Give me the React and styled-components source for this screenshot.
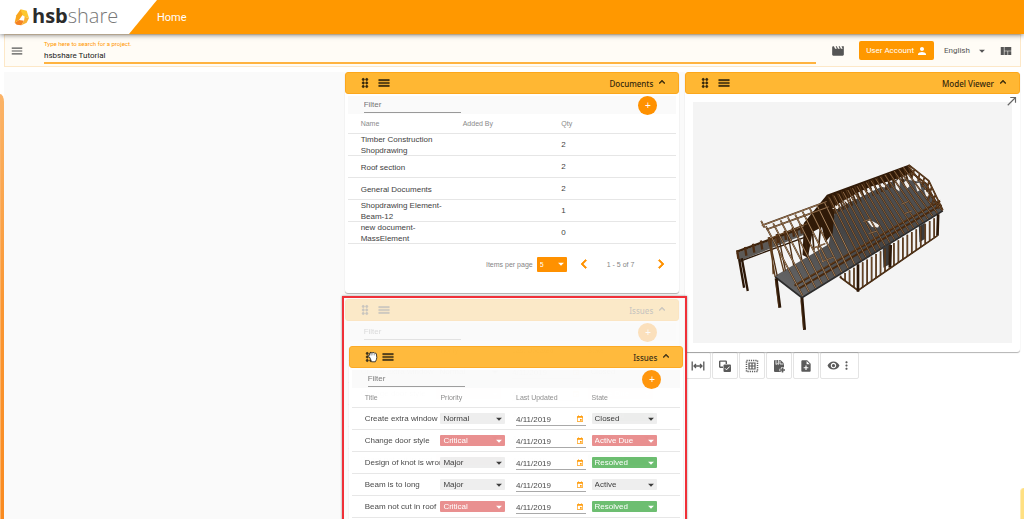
import React from 'react'
import styled, { createGlobalStyle } from "styled-components";
import { MdMenu, MdMovie, MdPerson, MdViewQuilt, MdArrowDropDown, MdDragIndicator, MdExpandLess, MdChevronLeft, MdChevronRight, MdCallMade, MdEvent, MdVisibility, MdMoreVert, MdNoteAdd } from "react-icons/md";

const documents = [
    { name: 'Timber Construction Shopdrawing', qty: 2 },
    { name: 'Roof section', qty: 2 },
    { name: 'General Documents', qty: 2 },
    { name: 'Shopdrawing Element-Beam-12', qty: 1 },
    { name: 'new document-MassElement', qty: 0 },
]

const issues = [
    { title: 'Create extra window', priority: 'Normal', state: 'Closed' },
    { title: 'Change door style', priority: 'Critical', state: 'Active Due' },
    { title: 'Design of knot is wrong', priority: 'Major', state: 'Resolved' },
    { title: 'Beam is to long', priority: 'Major', state: 'Active' },
    { title: 'Beam not cut in roof', priority: 'Critical', state: 'Resolved' },
]

const tones = {
    Critical: 'red',
    'Active Due': 'red',
    Resolved: 'green',
}

const toneColors = {
    red: '#e88b8b',
    green: '#66bb6a',
    grey: '#eeeeee',
    orange: '#ff9100',
}

function Panel({ title, children, minHeight }) {
    return (
        <PanelWrap>
            <PanelHeader>
                <IconButton aria-label={`Move ${title}`}><MdDragIndicator size={14} /></IconButton>
                <IconButton aria-label={`${title} menu`}><MdMenu size={14} /></IconButton>
                <h2>{title}</h2>
                <IconButton aria-label={`Collapse ${title}`}><MdExpandLess size={12} /></IconButton>
            </PanelHeader>
            <PanelBody $minHeight={minHeight}>{children}</PanelBody>
        </PanelWrap>
    )
}

function FilterRow({ label }) {
    return (
        <FilterBar>
            <FilterInput placeholder="Filter" aria-label={label} />
            <AddButton aria-label="Add">+</AddButton>
        </FilterBar>
    )
}

function Dropdown({ value, tone = 'grey', width, height, label }) {
    return (
        <SelectWrap $tone={tone} $width={width} $height={height}>
            <select defaultValue={value} aria-label={label}>
                <option>{value}</option>
            </select>
            <MdArrowDropDown size={14} />
        </SelectWrap>
    )
}

function DocumentsPanel() {
    return (
        <Panel title="Documents" minHeight="199px">
            <FilterRow label="Filter documents" />
            <Table>
                <colgroup>
                    <col width="35%" />
                    <col width="30%" />
                    <col width="35%" />
                </colgroup>
                <thead>
                    <tr><th>Name</th><th>Added By</th><th>Qty</th></tr>
                </thead>
                <tbody>
                    {documents.map(doc => (
                        <tr key={doc.name}>
                            <DocName>{doc.name}</DocName>
                            <td></td>
                            <td>{doc.qty}</td>
                        </tr>
                    ))}
                </tbody>
            </Table>
            <Pagination>
                <span>Items per page</span>
                <Dropdown value="5" tone="orange" width="30px" height="15px" label="Items per page" />
                <PageButton aria-label="Previous page"><MdChevronLeft size={18} /></PageButton>
                <span>1 - 5 of 7</span>
                <PageButton aria-label="Next page"><MdChevronRight size={18} /></PageButton>
            </Pagination>
        </Panel>
    )
}

function IssuesPanel() {
    return (
        <Panel title="Issues" minHeight="240px">
            <FilterRow label="Filter issues" />
            <Table>
                <colgroup>
                    <col width="27%" />
                    <col width="23%" />
                    <col width="23%" />
                    <col width="27%" />
                </colgroup>
                <thead>
                    <tr><th>Title</th><th>Priority</th><th>Last Updated</th><th>State</th></tr>
                </thead>
                <tbody>
                    {issues.map(issue => (
                        <tr key={issue.title}>
                            <IssueTitle>{issue.title}</IssueTitle>
                            <td><Dropdown value={issue.priority} tone={tones[issue.priority]} width="65px" height="11px" label="Priority" /></td>
                            <td>
                                <DateField>
                                    <input defaultValue="4/11/2019" aria-label="Last updated" />
                                    <MdEvent size={8} />
                                </DateField>
                            </td>
                            <td><Dropdown value={issue.state} tone={tones[issue.state]} width="65px" height="11px" label="State" /></td>
                        </tr>
                    ))}
                </tbody>
            </Table>
        </Panel>
    )
}

// point on the segment a-b
const at = (a, b, t) => [a[0] + (b[0] - a[0]) * t, a[1] + (b[1] - a[1]) * t]

// n members running from segment a-b to segment c-d
function members(a, b, c, d, n) {
    let path = ''
    for (let i = 0; i < n; i++) {
        const t = i / (n - 1)
        const p = at(a, b, t)
        const q = at(c, d, t)
        path += `M${p[0].toFixed(1)} ${p[1].toFixed(1)}L${q[0].toFixed(1)} ${q[1].toFixed(1)}`
    }
    return path
}

function Timber({ d, light = '#a07a58', dark = '#3b220c', width = 5 }) {
    return (
        <>
            <path d={d} stroke={dark} strokeWidth={width} />
            <path d={d} stroke={light} strokeWidth={width * 0.45} />
        </>
    )
}

function House() {
    return (
        <svg viewBox="0 0 318 241" role="img" aria-label="Timber frame model">
            <defs>
                <linearGradient id="deck" x1="0" y1="1" x2="1" y2="0">
                    <stop offset="0" stopColor="#6a6a6b" />
                    <stop offset=".5" stopColor="#444445" />
                    <stop offset="1" stopColor="#565657" />
                </linearGradient>
            </defs>
            <g transform="translate(32 48) scale(.3333)" fill="none">
                {/* rear beam and its post */}
                <path d="M34 308L240 232L246 250L44 332Z" fill="#5c5956" />
                <path d="M36 304L240 230" stroke="#3b220c" strokeWidth="7" />
                <path d="M44 333L236 262" stroke="#2b1707" strokeWidth="4" />
                <path d={members([40, 326], [230, 250], [36, 300], [226, 222], 9)} stroke="#4d2c12" strokeWidth="7" />
                <path d="M42 326L57 412M50 324L68 422" stroke="#2b1707" strokeWidth="7" />
                {/* deck */}
                <path d="M148 378L310 282L330 178L520 84L600 98L652 182L230 442Z" fill="url(#deck)" />
                <path d="M150 380L230 442L652 182" stroke="#2c2c2c" strokeWidth="5" />
                {/* far side of the roof */}
                <path d="M236 218L305 134L550 44L562 66L520 84L440 108L400 126L330 166L322 250L300 276L290 230L262 245L248 322L232 314Z" fill="#301a08" />
                <Timber d={members([308, 138], [548, 48], [330, 190], [560, 84], 19)} light="#54351a" />
                <path d="M320 176L344 160L338 176ZM356 150L374 144L366 160ZM420 126L444 116L440 124ZM462 108L486 98L478 112ZM508 98L524 82L522 124L512 116ZM536 96L546 88L552 108L542 118ZM568 100L582 98L588 118L576 124ZM596 120L606 116L612 140L602 138Z" fill="#f2eee9" />
                <path d="M426 212L436 210L462 224L458 232L440 230Z" fill="#f2eee9" />
                {/* left end trusses */}
                <path d={members([132, 262], [214, 234], [156, 376], [230, 330], 4)} stroke="#4b2d13" strokeWidth="4" />
                <path d="M130 262L150 380M138 262L144 372M150 262L176 364M132 266L246 220" stroke="#5e3c1c" strokeWidth="4" />
                <path d="M240 262L248 322M262 250L266 300M286 230L280 292" stroke="#3b220c" strokeWidth="5" />
                {/* near side of the roof */}
                <path d="M208 406L644 152M218 416L648 164" stroke="#49290e" strokeWidth="6" />
                <path d="M208 404L644 150" stroke="#6d4a29" strokeWidth="2" />
                <Timber d={members([122, 228], [298, 158], [232, 436], [388, 342], 9)} light="#c7a17b" />
                <Timber d={members([312, 142], [548, 46], [408, 330], [650, 180], 18)} light="#a07a55" />
                <Timber d="M108 212L118 232M110 226L304 154M124 238L310 170" light="#b38b66" />
                <Timber d="M262 294L300 280M290 334L326 320M276 288L294 336M414 214L438 206M430 250L456 242M528 162L548 154M538 190L560 182" light="#c7a17b" width={4} />
                {/* gable */}
                <Timber d="M550 44L610 92L652 180M556 66L602 100L640 176M566 60L560 80M582 72L578 94M596 84L590 110M610 94L604 124M618 112L608 150M630 134L618 164M642 158L630 174" light="#744b27" />
                {/* walls under the eave */}
                <path d="M472 292L496 278L496 340L474 352ZM580 228L598 218L598 266L582 276Z" fill="#3c3c3d" />
                <Timber d={members([346, 376], [386, 352], [346, 382], [386, 412], 4)} light="#7d5836" />
                <Timber d={members([412, 336], [626, 204], [412, 411], [626, 262], 17)} light="#7d5836" />
                <Timber d="M344 380L398 420L636 256" light="#5e3c1c" />
                <path d="M398 342L398 424M496 284L494 350M638 192L636 256" stroke="#2b1707" strokeWidth="8" />
                {/* posts */}
                <path d="M153 384L164 472M230 442L238 538" stroke="#2b1707" strokeWidth="9" />
                <path d="M151 390L161 470M227 450L235 536" stroke="#5e3c1c" strokeWidth="2" />
            </g>
        </svg>
    )
}

function ViewerTools() {
    return (
        <Tools>
            <ToolButton aria-label="Measure">
                <svg width="14" height="14" viewBox="0 0 14 14" fill="none" stroke="currentColor" strokeWidth="1.3">
                    <path d="M1.2 2.5v9M12.8 2.5v9M3 7h8M5 5L3 7l2 2M9 5l2 2-2 2" />
                </svg>
            </ToolButton>
            <ToolButton aria-label="Select objects">
                <svg width="14" height="14" viewBox="0 0 14 14" fill="none" stroke="currentColor" strokeWidth="1.4">
                    <path d="M5 8.3H2.3a.6.6 0 0 1-.6-.6v-5a.6.6 0 0 1 .6-.6h5.4a.6.6 0 0 1 .6.6V5" />
                    <rect x="5.5" y="5.5" width="7.5" height="7.5" rx="1" fill="currentColor" stroke="none" />
                    <path d="M7 9.3l1.5 1.5L11.6 7.6" stroke="#fff" strokeWidth="1" />
                </svg>
            </ToolButton>
            <ToolButton aria-label="Select all">
                <svg width="14" height="14" viewBox="0 0 14 14" fill="none" stroke="currentColor">
                    <rect x="1.5" y="1.5" width="11" height="11" strokeWidth="1.5" strokeDasharray="1.2 1" />
                    <path d="M4 4h6v6H4zM7 4v6M4 7h6" strokeWidth="1.2" />
                </svg>
            </ToolButton>
            <ToolButton aria-label="Save view">
                <svg width="14" height="14" viewBox="0 0 14 14" fill="currentColor">
                    <path d="M3 1h5.5L12 4.5V12a1 1 0 0 1-1 1H3a1 1 0 0 1-1-1V2a1 1 0 0 1 1-1z" />
                    <path d="M8 1.5V5h3.5M4 1v4.500l1.200-1 1.200 1V1" fill="none" stroke="#fff" strokeWidth=".8" />
                    <path d="M10.500 8v6M7.500 11h6" stroke="#fff" strokeWidth="2.400" />
                    <path d="M10.500 8.500v5M8 11h5" stroke="currentColor" strokeWidth="1.500" />
                </svg>
            </ToolButton>
            <ToolButton aria-label="New file"><MdNoteAdd size={14} /></ToolButton>
            <ToolButton aria-label="Visibility" $wide>
                <MdVisibility size={13} />
                <MdMoreVert size={13} />
            </ToolButton>
        </Tools>
    )
}

function App() {
    return (
        <Page>
            <GlobalStyle />
            <LeftEdge />
            <RightEdge />
            <Header>
                <Brand>
                    <svg width="16" height="18" viewBox="0 0 48 54">
                        <path d="M20 4L38 8L45 30L32 26L24 20Z" fill="#fdc82f" />
                        <path d="M20 4L26 20L15 36L2 44L7 22Z" fill="#f9a51b" />
                        <path d="M2 44L15 36L30 38L22 52L8 50Z" fill="#f58220" />
                        <path d="M45 30L32 26L30 38L22 52L38 44Z" fill="#f9b233" />
                    </svg>
                    <b>hsb</b><span>share</span>
                </Brand>
                <a href="#home">Home</a>
            </Header>
            <Toolbar>
                <IconButton aria-label="Menu"><MdMenu size={14} /></IconButton>
                <Search>
                    <label htmlFor="project">Type here to search for a project.</label>
                    <input id="project" defaultValue="hsbshare Tutorial" />
                </Search>
                <IconButton aria-label="Videos"><MdMovie size={14} /></IconButton>
                <AccountButton>User Account <MdPerson size={12} /></AccountButton>
                <Language>
                    <select defaultValue="English" aria-label="Language">
                        <option>English</option>
                    </select>
                    <MdArrowDropDown size={14} />
                </Language>
                <IconButton aria-label="Layout"><MdViewQuilt size={14} /></IconButton>
            </Toolbar>
            <Board>
                <Column $grey />
                <Column $grey>
                    <DocumentsPanel />
                    <DropSlot>
                        <Ghost inert><IssuesPanel /></Ghost>
                        <Dragged>
                            <IssuesPanel />
                            <GrabCursor viewBox="0 0 12 12" width="12" height="12">
                                <path d="M2.500 6L1.200 4.800Q1.500 3.600 2.800 4.200L2.600 2.500Q3.300 1.400 4.200 2.300Q4.800.8 5.800 1.800Q7 .8 7.600 2.200Q9 1.600 9.400 3L9.800 6.500Q9.600 9 8.300 10.800H4.500Q3.800 8.500 2.500 6Z" fill="#fff" stroke="#222" strokeWidth=".9" />
                                <path d="M4.300 2.500v2M5.900 2v2.300M7.600 2.400v2" stroke="#555" strokeWidth=".5" />
                            </GrabCursor>
                        </Dragged>
                        <Outline />
                    </DropSlot>
                </Column>
                <Column>
                    <Panel title="Model Viewer">
                        <Canvas><House /></Canvas>
                        <Expand aria-label="Open full view"><MdCallMade size={14} /></Expand>
                    </Panel>
                    <ViewerTools />
                </Column>
            </Board>
        </Page>
    )
}

export default App

const GlobalStyle = createGlobalStyle`
    * {
        box-sizing: border-box;
    }
    body {
        margin: 0;
        background: #fff;
        font-family: "Liberation Sans", Arial, sans-serif;
        font-size: 8px;
        color: #424242;
    }
    button, input, select {
        font: inherit;
        color: inherit;
        margin: 0;
        padding: 0;
        border: none;
        border-radius: 0;
        background: none;
        outline: none;
        appearance: none;
    }
    svg {
        display: block;
        flex-shrink: 0;
    }
`

const Page = styled.div`
    position: relative;
    height: 100vh;
    overflow: hidden;
    display: flex;
    flex-direction: column;
`

const LeftEdge = styled.div`
    position: absolute;
    left: 0;
    top: 94px;
    bottom: 0;
    width: 4px;
    background: linear-gradient(#fbb468, #fa9632 50%, #f98a20);
    border-left: 1px solid #fbb268;
    border-top-right-radius: 4px 8px;
`

const RightEdge = styled(LeftEdge)`
    left: auto;
    right: 0;
    top: auto;
    height: 31px;
    background: #ffe082;
    border-left: 1px solid #ffecb3;
    border-radius: 4px 0 0 0;
`

const Header = styled.header`
    position: relative;
    z-index: 1;
    flex-shrink: 0;
    height: 34px;
    display: flex;
    align-items: center;
    background: #ff9800;
    box-shadow: 0 1px 5px rgba(0, 0, 0, 0.5);
    a {
        font-family: Roboto, sans-serif;
        font-size: 11px;
        color: white;
        text-decoration: none;
    }
`

const Brand = styled.div`
    width: 157px;
    height: 100%;
    padding-left: 14px;
    display: flex;
    align-items: center;
    background: white;
    clip-path: polygon(0 0, 100% 0, 129px 100%, 0 100%);
    font-family: "Open Sans", sans-serif;
    font-size: 20px;
    line-height: 32px;
    color: #2b2b2b;
    svg {
        margin-right: 2px;
    }
    b {
        margin-bottom: 2px;
    }
    span {
        margin-bottom: 2px;
        font-weight: 300;
        color: #777;
    }
`

const Toolbar = styled.div`
    flex-shrink: 0;
    height: 33px;
    margin: 0 3px 5px 4px;
    padding: 0 7px 0 5px;
    display: flex;
    align-items: center;
    border: 1px solid #fde8c8;
    background: #fffcf6;
    font-family: Roboto, sans-serif;
    color: #555;
`

const IconButton = styled.button`
    display: flex;
    color: inherit;
    cursor: pointer;
`

const Search = styled.div`
    flex: 1;
    margin: 3px 15px 0 20px;
    display: flex;
    flex-direction: column;
    border-bottom: 2px solid #ffb340;
    label {
        font-size: 6px;
        line-height: 8px;
        color: #ff9800;
    }
    input {
        height: 14px;
        color: #212121;
    }
`

const AccountButton = styled.button`
    height: 19px;
    margin: 0 10px 0 14px;
    padding: 0 6px 0 7px;
    display: flex;
    align-items: center;
    gap: 2px;
    border-radius: 2px;
    background: #ff9800;
    color: white;
    cursor: pointer;
`

const Language = styled.div`
    position: relative;
    margin-right: 10px;
    select {
        width: 45px;
        height: 14px;
    }
    svg {
        position: absolute;
        right: 0;
        top: 0;
        pointer-events: none;
    }
`

const Board = styled.main`
    flex: 1;
    min-height: 0;
    position: relative;
    margin: 0 4px;
    display: grid;
    grid-template-columns: repeat(3, 1fr);
    gap: 6px;
`

const Column = styled.div`
    min-width: 0;
    display: flex;
    flex-direction: column;
    gap: ${props => props.$grey ? '6px' : '0'};
    background: ${props => props.$grey ? '#fafafa' : 'transparent'};
    box-shadow: ${props => props.$grey ? '6px 0 #fafafa' : 'none'};
`

const PanelWrap = styled.section`
    position: relative;
    flex-shrink: 0;
    background: white;
    border-radius: 3px;
    box-shadow: 0 1px 1px rgba(0, 0, 0, 0.3);
`

const PanelHeader = styled.header`
    height: 22px;
    padding: 0 10px 0 12px;
    display: flex;
    align-items: center;
    gap: 5px;
    border: 1px solid #fca71c;
    border-radius: 3px;
    background: #ffb733;
    color: #33260c;
    h2 {
        flex: 1;
        margin: 0;
        text-align: right;
        font-family: "Noto Sans", sans-serif;
        font-size: 8px;
        font-weight: 500;
    }
    svg path:last-child {
        stroke-width: 1;
    }
    button:last-child {
        margin: 0 0 3px -2px;
    }
`

const PanelBody = styled.div`
    min-height: ${props => props.$minHeight || 'auto'};
    padding: 2px 3px 0;
`

const FilterBar = styled.div`
    height: 18px;
    padding: 0 19px 0 16px;
    display: flex;
    align-items: center;
    justify-content: space-between;
    background: #fafafa;
`

const FilterInput = styled.input`
    width: 97px;
    height: 15px;
    border-bottom: 1px solid #999;
    &::placeholder {
        color: #757575;
        opacity: 1;
    }
`

const AddButton = styled.button`
    width: 19px;
    height: 19px;
    flex-shrink: 0;
    border-radius: 50%;
    background: #ff9100;
    color: white;
    font-size: 10px;
    line-height: 19px;
    cursor: pointer;
`

const Table = styled.table`
    width: 100%;
    table-layout: fixed;
    border-spacing: 0;
    line-height: 11px;
    th, td {
        height: 22px;
        padding: 0;
        text-align: left;
        vertical-align: top;
        box-shadow: inset 0 -1px #e6e6e6;
    }
    th {
        height: 20px;
        padding-top: 4px;
        font-size: 7px;
        font-weight: normal;
        color: #8a8a8a;
    }
    th:first-child, td:first-child {
        padding-left: 13px;
    }
    tbody td {
        padding-top: 5px;
    }
`

const DocName = styled.td`
    &&& {
        height: 22px;
        padding-top: 0;
        padding-right: 16px;
        vertical-align: middle;
    }
`

const IssueTitle = styled.td`
    overflow: hidden;
    white-space: nowrap;
`

const SelectWrap = styled.div`
    position: relative;
    width: ${props => props.$width};
    height: ${props => props.$height};
    border-radius: 1px;
    background: ${props => toneColors[props.$tone]};
    color: ${props => props.$tone === 'grey' ? '#333' : 'white'};
    select {
        display: block;
        width: 100%;
        height: 100%;
        padding-left: 3px;
    }
    svg {
        position: absolute;
        right: -1px;
        top: calc(50% - 7px);
        pointer-events: none;
    }
`

const DateField = styled.div`
    width: 70px;
    height: 13px;
    display: flex;
    align-items: center;
    border-bottom: 1px solid #a5a5a5;
    input {
        flex: 1;
        min-width: 0;
    }
    svg {
        color: #ff9800;
        margin-right: 2px;
    }
`

const Pagination = styled.div`
    padding: 11px 6px 0 0;
    display: flex;
    align-items: center;
    justify-content: flex-end;
    font-size: 7px;
    color: #858585;
    ${SelectWrap} {
        margin: 0 8px 0 4px;
    }
`

const PageButton = styled.button`
    display: flex;
    color: #ff9100;
    cursor: pointer;
    svg path:last-child {
        stroke-width: 1;
    }
    & + span {
        margin: 0 18px 0 14px;
    }
`

const DropSlot = styled.div`
    position: relative;
    z-index: 2;
`

const Ghost = styled.div`
    opacity: 0.25;
`

const Dragged = styled.div`
    position: absolute;
    left: 4px;
    right: -4px;
    top: 47px;
    opacity: 0.95;
`

const GrabCursor = styled.svg`
    position: absolute;
    left: 18px;
    top: 5px;
`

const Outline = styled.div`
    position: absolute;
    left: -3px;
    right: -8px;
    top: -3px;
    bottom: -60px;
    border: 2px solid #f03038;
    box-shadow: 0 0 2px rgba(0, 0, 0, 0.4);
    pointer-events: none;
`

const Canvas = styled.div`
    margin: 6px 5px 9px;
    background: #f4f4f4;
    svg {
        width: 100%;
    }
`

const Expand = styled(IconButton)`
    position: absolute;
    top: 22px;
    right: 1px;
    color: #666;
`

const Tools = styled.div`
    display: flex;
    gap: 1px;
`

const ToolButton = styled.button`
    width: ${props => props.$wide ? '39px' : '26px'};
    height: 27px;
    display: flex;
    align-items: center;
    justify-content: center;
    background: white;
    border: 1px solid #e4e4e4;
    border-radius: 2px;
    color: #5a5a5a;
    cursor: pointer;
`
